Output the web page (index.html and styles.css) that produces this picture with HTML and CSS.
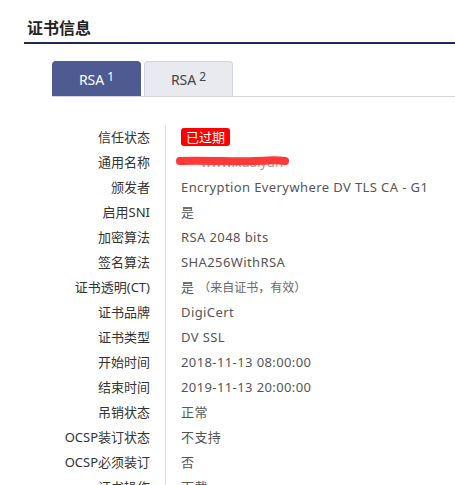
FILE: index.html
```html
<!DOCTYPE html>
<html lang="zh-CN">
<head>
    <meta charset="UTF-8">
    <meta name="viewport" content="width=device-width, initial-scale=1.0">
    <title>证书信息</title>
    <link rel="stylesheet" href="styles.css">
</head>
<body>
    <div class="section">
        <h2 class="section-title">证书信息</h2>

        <div class="tabs">
            <div class="tab active">RSA <sup>1</sup></div>
            <div class="tab">RSA <sup>2</sup></div>
        </div>

        <div class="info">
            <div class="label">信任状态</div>
            <div class="value"><span class="badge">已过期</span></div>

            <div class="label">通用名称</div>
            <div class="value masked">
                <span class="hidden-text">www.kuaiyun</span>
                <svg class="scribble" width="114" height="14" viewBox="0 0 114 14">
                    <path d="M4 7 C 30 6, 60 8, 80 7 S 100 6, 109 7" stroke="#ff3838" stroke-width="8" stroke-linecap="round" fill="none"/>
                </svg>
            </div>

            <div class="label">颁发者</div>
            <div class="value">Encryption Everywhere DV TLS CA - G1</div>

            <div class="label">启用SNI</div>
            <div class="value">是</div>

            <div class="label">加密算法</div>
            <div class="value">RSA 2048 bits</div>

            <div class="label">签名算法</div>
            <div class="value">SHA256WithRSA</div>

            <div class="label">证书透明(CT)</div>
            <div class="value">是 <span class="note">（来自证书，有效）</span></div>

            <div class="label">证书品牌</div>
            <div class="value">DigiCert</div>

            <div class="label">证书类型</div>
            <div class="value">DV SSL</div>

            <div class="label">开始时间</div>
            <div class="value">2018-11-13 08:00:00</div>

            <div class="label">结束时间</div>
            <div class="value">2019-11-13 20:00:00</div>

            <div class="label">吊销状态</div>
            <div class="value">正常</div>

            <div class="label">OCSP装订状态</div>
            <div class="value">不支持</div>

            <div class="label">OCSP必须装订</div>
            <div class="value">否</div>

            <div class="label">证书操作</div>
            <div class="value">下载</div>
        </div>
    </div>
</body>
</html>
```

FILE: styles.css
```css
body {
    margin: 0;
    background: #fff;
    font-family: "Noto Sans", "Noto Sans CJK SC", sans-serif;
    color: #333;
}
.section {
    margin: 15px 0 0 24px;
}
.section-title {
    margin: 0;
    padding: 0 0 1px 3px;
    font-size: 16px;
    line-height: 26px;
    font-weight: bold;
    color: #222;
    border-bottom: 2px solid #1e2b52;
}
.tabs {
    display: flex;
    gap: 3px;
    margin: 17px 0 0 28px;
    border-bottom: 1px solid #d3d4de;
}
.tab {
    width: 89px;
    height: 35px;
    box-sizing: border-box;
    display: flex;
    align-items: center;
    justify-content: center;
    font-size: 14px;
    color: #444;
    background: #e9eaf0;
    border: 1px solid #d3d4de;
    border-bottom: none;
    border-radius: 4px 4px 0 0;
}
.tab.active {
    background: #4d5b92;
    border-color: #4d5b92;
    color: #fff;
}
.tab sup {
    font-size: 12px;
    margin-left: 3px;
    position: relative;
    top: -3px;
}
.info {
    display: grid;
    grid-template-columns: 142px 1fr;
    margin-top: 28px;
    font-size: 13px;
}
.label,
.value {
    height: 25px;
    line-height: 25px;
    white-space: nowrap;
}
.label {
    text-align: right;
    padding-right: 15px;
    border-right: 1px solid #dcdcdc;
    color: #333;
}
.value {
    padding-left: 15px;
    color: #555;
    letter-spacing: 0.4px;
}
.badge {
    display: inline-block;
    background: #f00;
    color: #fff;
    line-height: 18px;
    padding: 0 5px;
    border-radius: 3px;
    letter-spacing: 0;
}
.note {
    font-size: 12px;
    color: #666;
    letter-spacing: 0;
}
.masked {
    position: relative;
}
.hidden-text {
    margin-left: 20px;
    color: #999;
    letter-spacing: 0;
}
.scribble {
    position: absolute;
    left: 10px;
    top: 4px;
}
```
